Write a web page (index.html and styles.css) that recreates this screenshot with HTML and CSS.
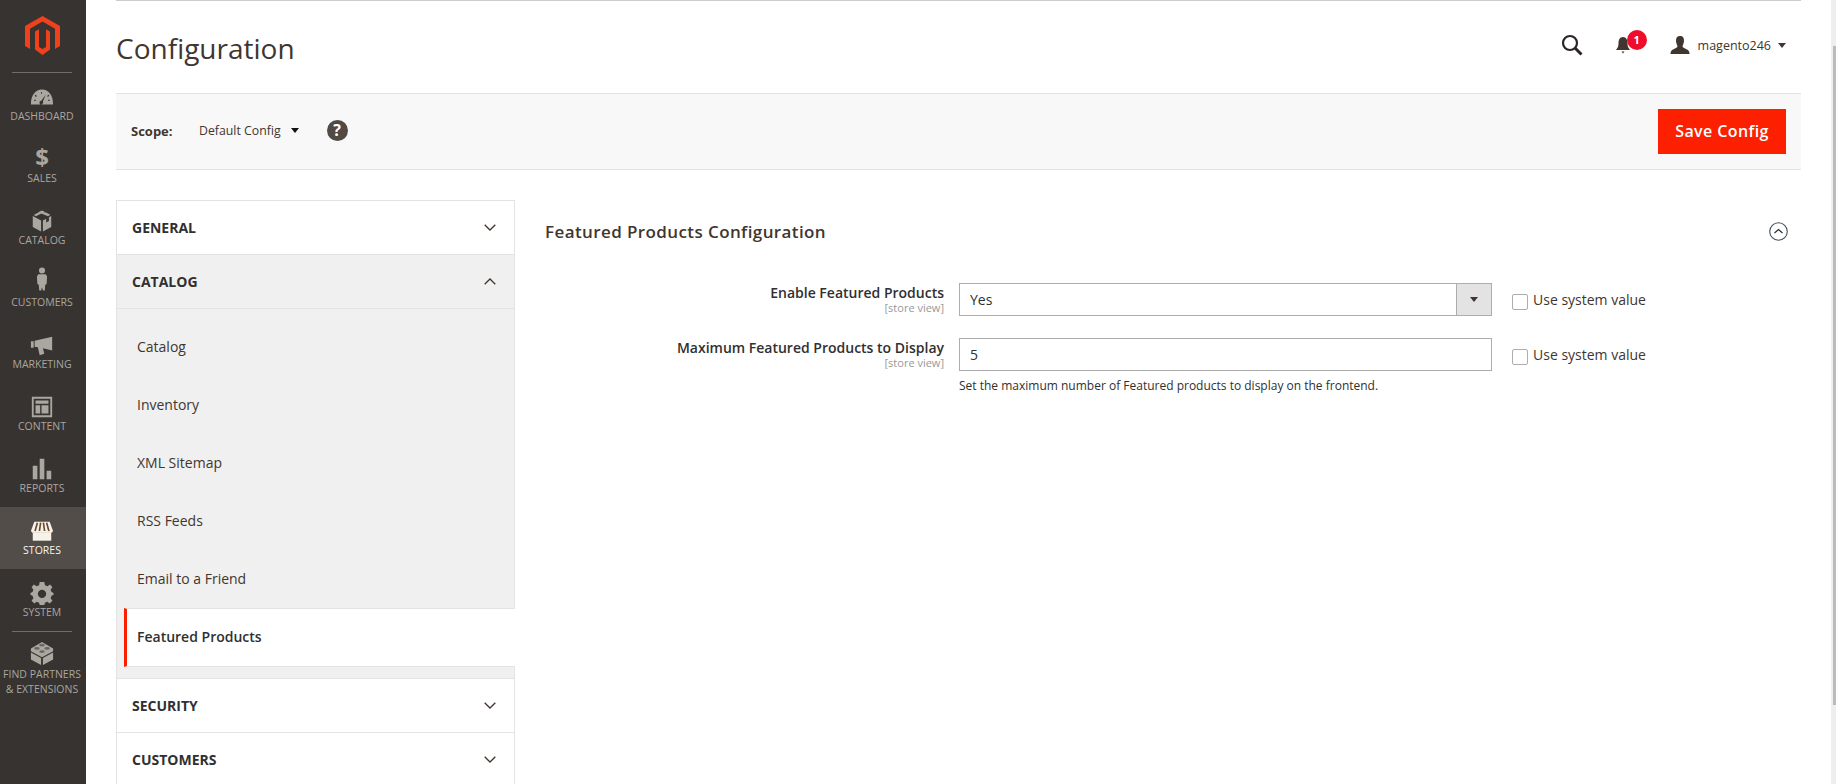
FILE: index.html
```html
<!DOCTYPE html>
<html>
<head>
    <title>Configuration</title>
    <link rel="stylesheet" href="styles.css">
</head>
<body>
    <nav class="menu">
        <div class="logo">
            <svg width="35" height="39" viewBox="0 0 35 39"><path d="M17.5 0L35 10V30L30 33V12.8L17.5 5.6 5 12.8V33L0 30V10Z"/><path d="M10 15.5L14 13.3V31L17.5 33 21 31V13.3L25 15.5V33.5L17.5 39 10 33.5Z"/></svg>
        </div>
        <a class="menu-item">
            <svg class="menu-icon" viewBox="0 0 26 26"><path fill-rule="evenodd" d="M1 21C1 11 6 5 13 5s12 6 12 16zM6 10.500l-1 1 1.500 1.500 1-1zM13 7.500h-1v2h1zM20 10.500l-1.500 1.500 1 1 1.500-1.500zM4.500 16v1h2v-1zM19.500 16v1h2v-1zM17 10.500l-4.800 6.500a2 2 0 1 0 1.800 1z"/></svg>
            <span>DASHBOARD</span>
        </a>
        <a class="menu-item">
            <span class="dollar">$</span>
            <span>SALES</span>
        </a>
        <a class="menu-item">
            <svg class="menu-icon" viewBox="0 0 26 26"><path d="M3 7.500L12 12.500V24.500L3 19.500zM23 7.500V19.500L14 24.500V12.500L17.500 10.500V14.500L20.500 13V9zM13 1.500L16 3 6.500 7.800 4 6.400zM18 4L22 6.300 19.500 7.900 9 3.500 11 2.400z"/></svg>
            <span>CATALOG</span>
        </a>
        <a class="menu-item">
            <svg class="menu-icon" viewBox="0 0 26 26"><g transform="translate(0 -4)"><circle cx="13" cy="3.500" r="3.300"/><path d="M9 7.500H17L18.500 10 18 18 16.500 19 16 25H14L13 21.500 12 25H10L9.500 19 8 18 7.500 10Z"/></g></svg>
            <span>CUSTOMERS</span>
        </a>
        <a class="menu-item">
            <svg class="menu-icon" viewBox="0 0 26 26"><path d="M1 9H4V16H1zM5 8.500L24 4V19L14 16.500 15.500 22.500 10.500 24 8.500 15.500 5 15z"/></svg>
            <span>MARKETING</span>
        </a>
        <a class="menu-item">
            <svg class="menu-icon" viewBox="0 0 26 26"><path fill-rule="evenodd" d="M2 2H24V24H2zM4 4V22H22V4zM6 6H20V9.500H6zM6 11H11V20H6zM12.500 11H20V20H12.500z"/></svg>
            <span>CONTENT</span>
        </a>
        <a class="menu-item">
            <svg class="menu-icon" viewBox="0 0 26 26"><path d="M3 9.500H8V24H3zM10.500 2H15.500V24H10.500zM18 15H23V24H18z"/></svg>
            <span>REPORTS</span>
        </a>
        <a class="menu-item active">
            <svg class="menu-icon" viewBox="0 0 26 26"><path d="M3 14.500H23V23.500H3z"/><path d="M4.700 3H21.300L25 13 23.500 15H2.500L1 13Z"/><path class="stripe" d="M8 4L5.500 13M11.500 4L10.200 13M14.500 4L15.800 13M18 4L20.500 13" fill="none" stroke-width="1.800"/></svg>
            <span>STORES</span>
        </a>
        <a class="menu-item">
            <svg class="menu-icon" viewBox="0 0 26 26"><path fill-rule="evenodd" d="M10.500 1H15.500L16.200 4.500 18.800 5.600 21.800 3.700 24.300 6.700 22.300 9.400 23.300 12 25.500 13V15L23.300 16 22.300 18.600 24.300 21.300 21.300 24.300 18.800 22.400 16.200 23.500 15.500 26H10.500L9.800 23.500 7.200 22.400 4.700 24.300 1.700 21.300 3.700 18.600 2.700 16 .5 15V13L2.700 12 3.700 9.400 1.700 6.700 4.200 3.700 7.200 5.600 9.800 4.500ZM13 9.500A4.500 4.500 0 1 0 13 18.500 4.500 4.500 0 1 0 13 9.500Z"/></svg>
            <span>SYSTEM</span>
        </a>
        <a class="menu-item partners">
            <svg class="menu-icon" viewBox="0 0 26 26"><path d="M13 1L25 8V11L13 17.500 1 11V8ZM1 12.500L12 18.500V26L1 20ZM25 12.500V20L14 26V18.500Z"/><g class="studs"><ellipse cx="13" cy="4.500" rx="3" ry="1.500"/><ellipse cx="7.500" cy="8" rx="3" ry="1.500"/><ellipse cx="18.500" cy="8" rx="3" ry="1.500"/><ellipse cx="13" cy="11.500" rx="3" ry="1.500"/></g></svg>
            <span>FIND PARTNERS<br>&amp; EXTENSIONS</span>
        </a>
    </nav>

    <div class="page">
        <header class="page-header">
            <h1>Configuration</h1>
            <div class="header-actions">
                <svg class="search-icon" viewBox="0 0 22 22" width="22" height="22"><circle cx="9" cy="9" r="7" fill="none" stroke="#2b2623" stroke-width="2.200"/><path d="M14 14L20.500 20.500" stroke="#2b2623" stroke-width="3"/></svg>
                <div class="notify">
                    <svg viewBox="0 0 16 18" width="16" height="18"><path fill="#41362f" d="M8 1C4.500 1 3.500 4 3.500 7.500 3.500 10.500 2.500 12 1 14H15C13.500 12 12.500 10.500 12.500 7.500 12.500 4 11.500 1 8 1ZM6.500 15.500H9.500L8 17.500Z"/></svg>
                    <span class="badge">1</span>
                </div>
                <div class="user">
                    <svg viewBox="0 0 20 18" width="20" height="18"><path fill="#41362f" d="M10 0C7 0 6 2 6 4.500 6 7 7 9 7.500 10 7.500 11.500 6 12 3 13.500 1 14.500 .5 16 .5 18H19.500C19.500 16 19 14.500 17 13.500 14 12 12.500 11.500 12.500 10 13 9 14 7 14 4.500 14 2 13 0 10 0Z"/></svg>
                    <span>magento246</span>
                    <i class="caret small user-caret"></i>
                </div>
            </div>
        </header>

        <div class="action-bar">
            <div class="scope">
                <span class="scope-label">Scope:</span>
                <span class="scope-value">Default Config</span>
                <i class="caret dark"></i>
                <span class="help">?</span>
            </div>
            <button class="save-btn">Save Config</button>
        </div>

        <div class="columns">
            <aside class="tabs">
                <div class="tab-head">
                    <span>GENERAL</span>
                    <svg class="chev" viewBox="0 0 12 7" width="12" height="7"><path d="M.7 .7L6 6 11.300 .7"/></svg>
                </div>
                <div class="tab-head open">
                    <span>CATALOG</span>
                    <svg class="chev" viewBox="0 0 12 7" width="12" height="7"><path d="M.7 6.300L6 1 11.300 6.300"/></svg>
                </div>
                <div class="tab-items">
                    <a class="tab-item">Catalog</a>
                    <a class="tab-item">Inventory</a>
                    <a class="tab-item">XML Sitemap</a>
                    <a class="tab-item">RSS Feeds</a>
                    <a class="tab-item">Email to a Friend</a>
                    <a class="tab-item current">Featured Products</a>
                </div>
                <div class="tab-head">
                    <span>SECURITY</span>
                    <svg class="chev" viewBox="0 0 12 7" width="12" height="7"><path d="M.7 .7L6 6 11.300 .7"/></svg>
                </div>
                <div class="tab-head">
                    <span>CUSTOMERS</span>
                    <svg class="chev" viewBox="0 0 12 7" width="12" height="7"><path d="M.7 .7L6 6 11.300 .7"/></svg>
                </div>
            </aside>

            <main class="section">
                <div class="section-title">
                    <h2>Featured Products Configuration</h2>
                    <svg viewBox="0 0 19 19" width="19" height="19"><circle cx="9.500" cy="9.500" r="8.800" fill="none" stroke="#41505e" stroke-width="1.100"/><path d="M5.500 11L9.500 7.500 13.500 11" fill="none" stroke="#2b2623" stroke-width="1.100"/></svg>
                </div>
                <div class="field">
                    <div class="field-label">
                        <label>Enable Featured Products</label>
                        <small>[store view]</small>
                    </div>
                    <div class="field-control">
                        <div class="select">
                            <span>Yes</span>
                            <span class="select-btn"><i class="caret small"></i></span>
                        </div>
                    </div>
                    <label class="inherit"><i class="check"></i>Use system value</label>
                </div>
                <div class="field">
                    <div class="field-label">
                        <label>Maximum Featured Products to Display</label>
                        <small>[store view]</small>
                    </div>
                    <div class="field-control">
                        <div class="input">5</div>
                        <p class="note">Set the maximum number of Featured products to display on the frontend.</p>
                    </div>
                    <label class="inherit"><i class="check"></i>Use system value</label>
                </div>
            </main>
        </div>
    </div>

    <div class="scrollbar"><div class="scroll-thumb"></div></div>
</body>
</html>
```

FILE: styles.css
```css
* {
    box-sizing: border-box;
}

html, body {
    height: 100%;
}

body {
    margin: 0;
    display: flex;
    height: 784px;
    overflow: hidden;
    background-color: #fff;
    color: #41362f;
    font-family: "Open Sans", sans-serif;
    font-size: 14px;
}

/* left menu */
.menu {
    width: 86px;
    flex-shrink: 0;
    background-color: #373330;
    display: flex;
    flex-direction: column;
}

.logo {
    height: 73px;
    margin: 0 14px 0 12px;
    padding-top: 16px;
    text-align: center;
    border-bottom: 1px solid #736d66;
}

.logo path {
    fill: #f1401c;
}

.menu-item {
    height: 62px;
    flex-shrink: 0;
    display: flex;
    flex-direction: column;
    align-items: center;
    padding: 12px 2px 0 0;
    color: #aaa6a0;
    font-size: 10.500px;
    line-height: 14px;
    text-align: center;
    white-space: nowrap;
}

.menu-item span {
    display: block;
}

.menu-icon {
    width: 24px;
    height: 24px;
    overflow: visible;
    fill: #aaa6a0;
}

.menu-item .dollar {
    height: 24px;
    font-size: 24px;
    font-weight: 700;
    line-height: 20px;
}

.menu-item.active {
    background-color: #524d49;
    color: #f7f3eb;
}

.menu-item.active .menu-icon {
    fill: #f7f3eb;
}

.stripe {
    stroke: #6b4a2a;
}

.menu-item.partners {
    position: relative;
    height: 78px;
    padding-top: 10px;
    line-height: 15px;
}

.menu-item.partners span {
    margin-top: 2px;
}

.menu-item.partners::before {
    content: "";
    position: absolute;
    top: 0;
    left: 12px;
    right: 14px;
    height: 1px;
    background-color: #736d66;
}

.studs {
    fill: #373330;
    fill-opacity: .55;
}

/* page */
.page {
    flex: 1;
    min-width: 0;
    padding: 0 30px;
}

.page-header {
    height: 93px;
    display: flex;
    justify-content: space-between;
    align-items: center;
    border-top: 1px solid #ccc;
    padding-top: 1px;
}

h1 {
    margin: 0;
    font-size: 28px;
    font-weight: 400;
    line-height: 36px;
    color: #41362f;
}

.header-actions {
    display: flex;
    align-items: center;
    padding-right: 15px;
    margin-top: -5px;
}

.search-icon {
    margin-right: 32px;
}

.notify {
    position: relative;
    display: flex;
    width: 16px;
    height: 18px;
    margin-right: 39px;
}

.badge {
    position: absolute;
    top: -6px;
    left: 12px;
    width: 20px;
    height: 20px;
    border-radius: 50%;
    background-color: #ee0e2b;
    color: #fff;
    font-size: 11px;
    font-weight: 700;
    line-height: 20px;
    text-align: center;
}

.user {
    display: flex;
    align-items: center;
    gap: 8px;
    font-size: 12.500px;
    color: #41362f;
}

.caret {
    display: inline-block;
    width: 0;
    height: 0;
    border-left: 4.500px solid transparent;
    border-right: 4.500px solid transparent;
    border-top: 5px solid #41362f;
}

.caret.small {
    border-left-width: 4px;
    border-right-width: 4px;
    border-top-width: 5px;
}

.user-caret {
    margin-left: -1px;
}

.caret.dark {
    border-top-color: #111;
    margin-left: 10px;
}

.action-bar {
    height: 77px;
    display: flex;
    justify-content: space-between;
    align-items: center;
    padding: 0 15px;
    background-color: #f8f8f8;
    border-top: 1px solid #e3e3e3;
    border-bottom: 1px solid #e3e3e3;
}

.scope {
    display: flex;
    align-items: center;
    margin-top: -2px;
    font-size: 13px;
}

.scope-label {
    width: 68px;
    font-weight: 700;
}

.scope-value {
    font-size: 12.300px;
}

.help {
    width: 21px;
    height: 21px;
    margin-left: 28px;
    border-radius: 50%;
    background-color: #514943;
    color: #fff;
    font-size: 16px;
    font-weight: 700;
    line-height: 21px;
    text-align: center;
}

.save-btn {
    width: 128px;
    height: 45px;
    border: none;
    padding: 0 0 2px;
    background-color: #fd2000;
    color: #fff;
    font-family: inherit;
    font-size: 16px;
    font-weight: 600;
    letter-spacing: .4px;
}

.columns {
    display: flex;
    align-items: flex-start;
    padding-top: 30px;
}

/* config tabs */
.tabs {
    width: 399px;
    flex-shrink: 0;
    border-left: 1px solid #e3e3e3;
    border-right: 1px solid #e3e3e3;
    border-top: 1px solid #e3e3e3;
}

.tab-head {
    height: 54px;
    display: flex;
    justify-content: space-between;
    align-items: center;
    padding: 0 18px 0 15px;
    border-bottom: 1px solid #e3e3e3;
    color: #303030;
    font-size: 14px;
    font-weight: 700;
}

.tab-head.open {
    background-color: #f0f0f0;
}

.chev path {
    fill: none;
    stroke: #41362f;
    stroke-width: 1.300;
}

.tab-items {
    background-color: #f0f0f0;
    padding: 9px 0 11px;
    border-bottom: 1px solid #e3e3e3;
}

.tab-item {
    display: block;
    height: 58px;
    padding-left: 20px;
    color: #41362f;
    line-height: 58px;
}

.tab-item.current {
    height: 59px;
    margin-left: 7px;
    margin-right: -1px;
    padding-left: 10px;
    border-left: 3px solid #fd2000;
    border-bottom: 1px solid #e3e3e3;
    border-top: 1px solid #e3e3e3;
    background-color: #fff;
    color: #303030;
    font-weight: 600;
    line-height: 56px;
}

/* config section */
.section {
    flex: 1;
    min-width: 0;
    padding: 0 13px 0 30px;
}

.section-title {
    height: 62px;
    display: flex;
    justify-content: space-between;
    align-items: center;
    margin-bottom: 21px;
}

h2 {
    margin: 0;
    color: #41362f;
    font-size: 17px;
    font-weight: 600;
    letter-spacing: .4px;
}

.field {
    display: flex;
    align-items: flex-start;
    margin-bottom: 22px;
}

.field-label {
    width: 399px;
    flex-shrink: 0;
    text-align: right;
    padding-top: 1px;
}

.field-label label {
    display: block;
    font-weight: 600;
    line-height: 18px;
    color: #303030;
}

.field-label small {
    display: block;
    color: #999;
    font-size: 11px;
    line-height: 12px;
}

.field-control {
    width: 533px;
    margin-left: 15px;
    flex-shrink: 0;
}

.select, .input {
    height: 33px;
    display: flex;
    align-items: center;
    justify-content: space-between;
    padding-left: 10px;
    border: 1px solid #adadad;
    background-color: #fff;
    color: #303030;
}

.select-btn {
    width: 35px;
    height: 31px;
    display: flex;
    align-items: center;
    justify-content: center;
    background-color: #e3e3e3;
    border-left: 1px solid #adadad;
}

.note {
    margin: 6px 0 0;
    color: #303030;
    font-size: 12px;
    line-height: 18px;
}

.inherit {
    display: flex;
    align-items: flex-start;
    margin-left: 20px;
    color: #41362f;
    line-height: 18px;
    padding-top: 8px;
}

.check {
    width: 16px;
    height: 16px;
    margin: 3px 5px 0 0;
    border: 1px solid #adadad;
    border-radius: 2px;
    background-color: #fff;
}

.scrollbar {
    width: 5px;
    flex-shrink: 0;
    padding-top: 46px;
    background-color: #eee;
}

.scroll-thumb {
    width: 3px;
    height: 659px;
    margin-left: 2px;
    background-color: #bbb;
}
```
